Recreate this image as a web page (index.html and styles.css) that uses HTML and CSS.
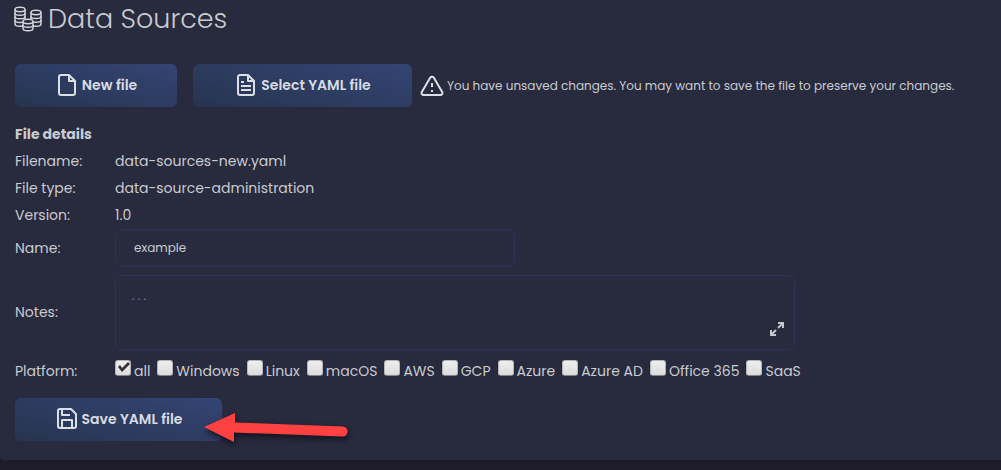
FILE: index.html
```html
<!DOCTYPE html>
<html lang="en">
<head>
<meta charset="utf-8">
<title>Data Sources</title>
<link rel="stylesheet" href="styles.css">
</head>
<body>
<main class="panel">
  <h1 class="title">
    <svg class="title-icon" viewBox="0 0 28 26" aria-hidden="true">
      <g class="coins">
        <path d="M1 3.500v14.500c0 3 10 3 10 0V3.500"/>
        <path d="M1 7c0 3 10 3 10 0M1 10.600c0 3 10 3 10 0M1 14.200c0 3 10 3 10 0"/>
        <ellipse cx="6" cy="3.500" rx="5" ry="2.200"/>
        <path d="M17 6.500V18c0 3 10 3 10 0V6.500"/>
        <path d="M17 10.300c0 3 10 3 10 0M17 14.100c0 3 10 3 10 0"/>
        <ellipse cx="22" cy="6.500" rx="5" ry="2.200"/>
      </g>
      <g class="coins coins-front">
        <path d="M9 15.500v7c0 3 10 3 10 0v-7"/>
        <path d="M9 19c0 3 10 3 10 0"/>
        <ellipse cx="14" cy="15.500" rx="5" ry="2.200"/>
      </g>
    </svg>
    Data Sources
  </h1>

  <div class="toolbar">
    <button class="button button-new" type="button">
      <svg class="icon" viewBox="0 0 24 24" aria-hidden="true"><path d="M14 2H6a2 2 0 0 0-2 2v16a2 2 0 0 0 2 2h12a2 2 0 0 0 2-2V8zM14 2v6h6"/></svg>
      New file
    </button>
    <button class="button button-select" type="button">
      <svg class="icon" viewBox="0 0 24 24" aria-hidden="true"><path d="M14 2H6a2 2 0 0 0-2 2v16a2 2 0 0 0 2 2h12a2 2 0 0 0 2-2V8zM14 2v6h6M7 9h3M7 13h10M7 17h10"/></svg>
      Select YAML file
    </button>
    <p class="warning">
      <svg class="icon" viewBox="0 0 24 24" aria-hidden="true"><path d="M10.300 3.600 1.800 18a2 2 0 0 0 1.700 3h17a2 2 0 0 0 1.700-3L13.700 3.600a2 2 0 0 0-3.400 0zM12 9v4M12 16v2"/></svg>
      You have unsaved changes. You may want to save the file to preserve your changes.
    </p>
  </div>

  <form class="details">
    <h2 class="details-title">File details</h2>
    <span>Filename:</span><span>data-sources-new.yaml</span>
    <span>File type:</span><span>data-source-administration</span>
    <span>Version:</span><span>1.0</span>
    <label for="name">Name:</label>
    <input class="field name" id="name" type="text" value="example">
    <label class="spaced" for="notes">Notes:</label>
    <div class="notes-box spaced">
      <textarea class="field notes" id="notes" placeholder=". . ."></textarea>
      <button class="expand" type="button" aria-label="Expand notes">
        <svg viewBox="0 0 14 14" aria-hidden="true"><path d="M8 1h5v5M13 1 8 6M1 8v5h5M1 13l5-5"/></svg>
      </button>
    </div>
    <span class="platform-label" id="platform">Platform:</span>
    <div class="platforms" role="group" aria-labelledby="platform">
      <label class="option"><input class="check" type="checkbox" checked>all</label>
      <label class="option"><input class="check" type="checkbox">Windows</label>
      <label class="option"><input class="check" type="checkbox">Linux</label>
      <label class="option"><input class="check" type="checkbox">macOS</label>
      <label class="option"><input class="check" type="checkbox">AWS</label>
      <label class="option"><input class="check" type="checkbox">GCP</label>
      <label class="option"><input class="check" type="checkbox">Azure</label>
      <label class="option"><input class="check" type="checkbox">Azure AD</label>
      <label class="option"><input class="check" type="checkbox">Office 365</label>
      <label class="option"><input class="check" type="checkbox">SaaS</label>
    </div>
  </form>

  <div class="save">
    <button class="button button-save" type="button">
      <svg class="icon" viewBox="0 0 24 24" aria-hidden="true"><path d="M5 2h11l5 5v12a2 2 0 0 1-2 2H5a2 2 0 0 1-2-2V4a2 2 0 0 1 2-2zM7 21v-8h10v8M7 2v6h8"/></svg>
      Save YAML file
    </button>
    <svg class="arrow" viewBox="0 0 150 42" aria-hidden="true"><path d="M4 19 35 5v9.500l108 4a5 5 0 0 1-1 10l-108-4V34z"/></svg>
  </div>
</main>
</body>
</html>
```
FILE: styles.css
```css
* {
  box-sizing: border-box;
}

body {
  margin: 0;
  background: #1e1c28;
  color: #c8cad0;
  font: 14px/27px Poppins, Inter, sans-serif;
}

.panel {
  padding: 0 15px 19px;
  background: #282a3d;
  border-bottom-left-radius: 4px;
}

.title {
  display: flex;
  align-items: center;
  gap: 6px;
  margin: 0;
  padding-bottom: 26px;
  font-size: 27px;
  font-weight: 300;
  line-height: 38px;
}

.title-icon {
  width: 28px;
  height: 26px;
  margin-left: -1px;
}

.coins {
  fill: none;
  stroke: #d4d5d9;
  stroke-width: 1.5;
}

.coins-front {
  fill: #282a3d;
}

.toolbar {
  display: flex;
  align-items: center;
  gap: 16px;
}

.button {
  display: flex;
  align-items: center;
  justify-content: center;
  gap: 3px;
  flex: none;
  height: 43px;
  padding: 0 0 2px;
  border: 0;
  border-radius: 6px;
  background: linear-gradient(15deg, #27344f, #344474);
  color: #d8dbe2;
  font: 600 14px/20px Poppins, Inter, sans-serif;
}

.button-new {
  width: 162px;
}

.button-select {
  width: 219px;
}

.button-save {
  width: 207px;
}

.icon {
  flex: none;
  width: 24px;
  height: 24px;
  fill: none;
  stroke: #dcdfe6;
  stroke-width: 2;
  stroke-linejoin: round;
}

.warning {
  display: flex;
  align-items: center;
  gap: 3px;
  margin: 0 0 0 -8px;
  font-size: 12px;
  line-height: 20px;
}

.details {
  display: grid;
  grid-template-columns: 100px 1fr;
  align-items: center;
  padding: 14px 0 13px;
}

.details-title {
  grid-column: 1 / -1;
  margin: 0;
  font-size: 14px;
  font-weight: 700;
}

.field {
  display: block;
  width: 100%;
  border: 1px solid #2c3356;
  border-radius: 6px;
  background: transparent;
  color: #c8cad0;
  font: 12px/20px Poppins, Inter, sans-serif;
}

.name {
  max-width: 400px;
  height: 38px;
  padding: 0 18px;
}

.spaced {
  margin-top: 8px;
}

.notes-box {
  position: relative;
  max-width: 680px;
}

.notes {
  height: 75px;
  padding: 10px 16px;
  resize: none;
}

.notes::placeholder {
  color: #7a8799;
}

.expand {
  position: absolute;
  right: 11px;
  bottom: 14px;
  width: 14px;
  height: 14px;
  padding: 0;
  border: 0;
  background: none;
}

.expand svg {
  display: block;
  fill: none;
  stroke: #c4c6cc;
  stroke-width: 2;
}

.platform-label,
.platforms {
  padding-top: 8px;
}

.platforms {
  display: flex;
  flex-wrap: wrap;
  column-gap: 7px;
}

.option {
  display: flex;
  gap: 3px;
}

.check {
  display: grid;
  appearance: none;
  width: 16px;
  height: 16px;
  margin: 2px 0 0;
  border: 1px solid #b5b5b5;
  border-bottom-color: #858585;
  border-radius: 3px;
  background: linear-gradient(#eeeeee, #dcdcdc);
}

.check:checked::before {
  content: "";
  height: 14px;
  background: #333333;
  clip-path: polygon(2px 6px, 4px 4px, 6px 7px, 12px 1px, 14px 3px, 6px 11px);
}

.save {
  position: relative;
}

.arrow {
  position: absolute;
  left: 185px;
  top: 10px;
  width: 150px;
  height: 42px;
  overflow: visible;
  fill: #ff4141;
  filter: drop-shadow(1px 3px 3px #11121e);
}
```
